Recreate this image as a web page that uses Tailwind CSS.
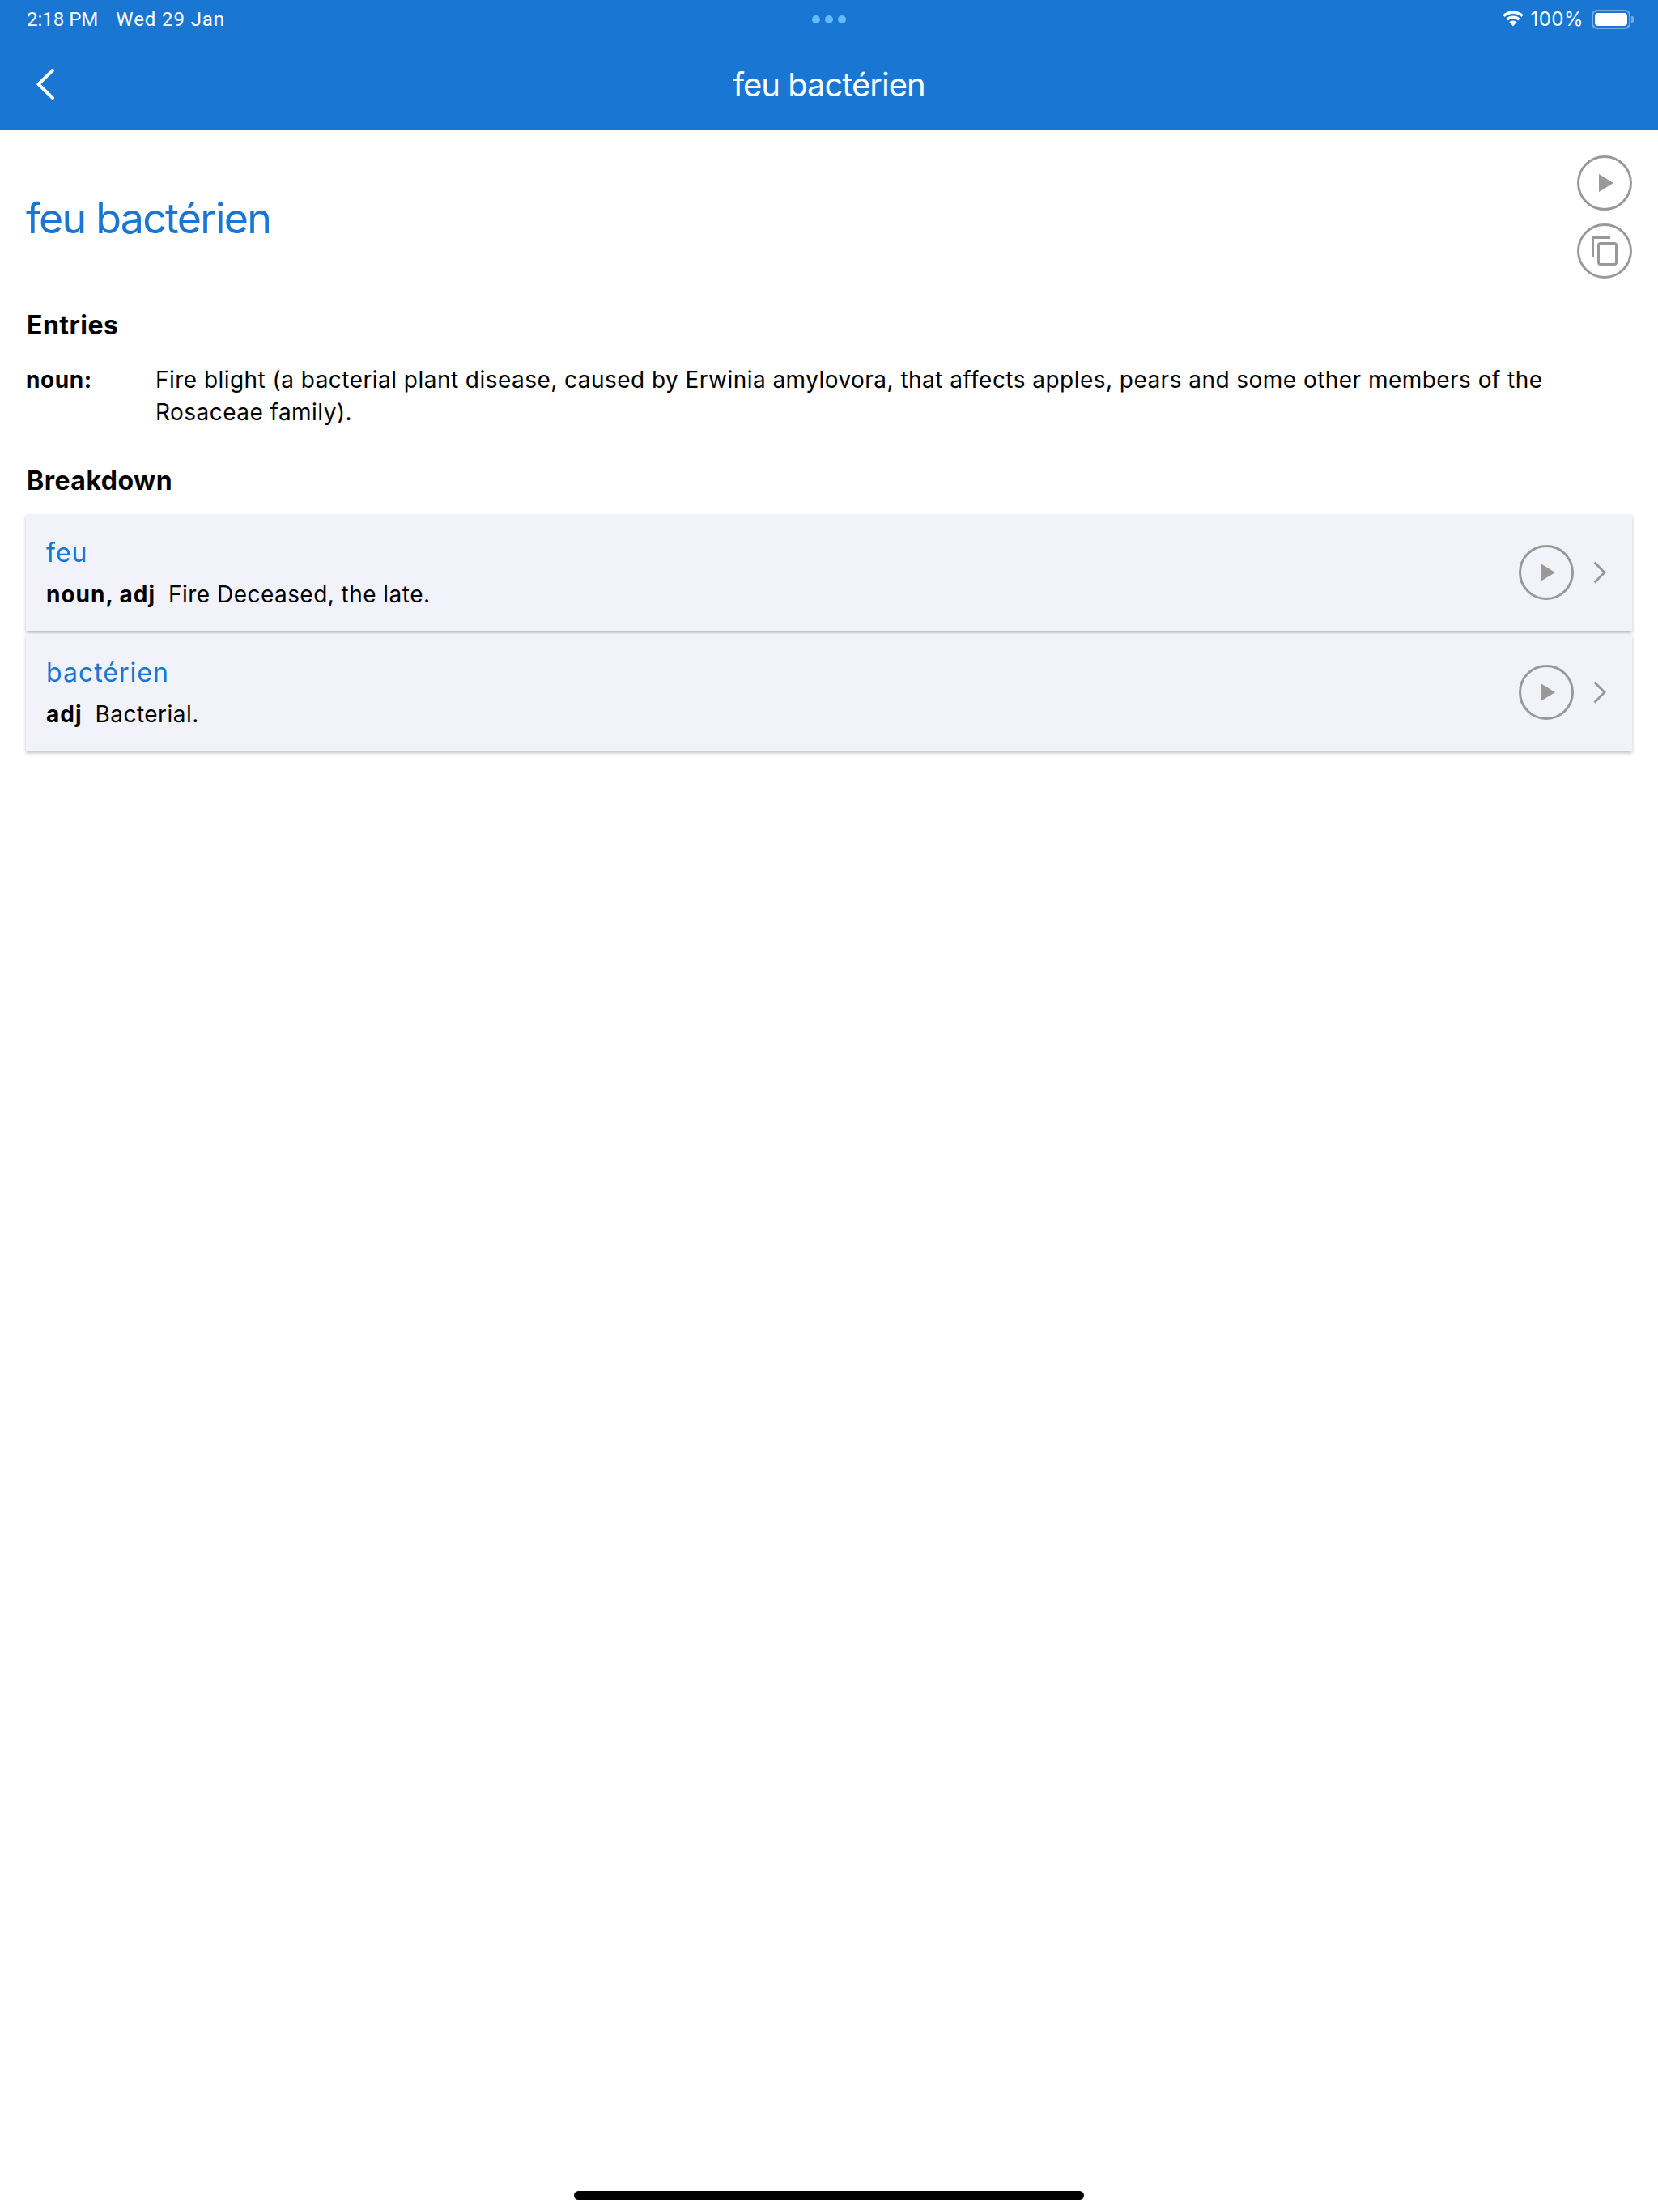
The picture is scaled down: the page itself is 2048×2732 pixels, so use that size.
<!DOCTYPE html>
<html lang="en">
<head>
    <meta charset="UTF-8">
    <meta name="viewport" content="width=device-width, initial-scale=1.0">
    <title>feu bactérien</title>
    <script src="https://cdn.jsdelivr.net/npm/@tailwindcss/browser@4"></script>
</head>
<body class="bg-white h-[2732px] w-[2048px] overflow-hidden relative font-['Inter',sans-serif] text-black">
    <!-- App bar with status row -->
    <header class="bg-[#1976d2] h-[160px] text-white flex flex-col">
        <div class="h-[48px] flex items-center justify-between pl-[33px] pr-[30px] text-[24px] relative">
            <div class="flex gap-[22px] font-['Roboto',sans-serif]">
                <span>2:18 PM</span>
                <span class="tracking-[0.9px]">Wed 29 Jan</span>
            </div>
            <div class="absolute left-[1003px] top-[19px] flex gap-[6px]">
                <span class="w-[10px] h-[10px] rounded-full bg-[#64bbff]"></span>
                <span class="w-[10px] h-[10px] rounded-full bg-[#64bbff]"></span>
                <span class="w-[10px] h-[10px] rounded-full bg-[#64bbff]"></span>
            </div>
            <div class="flex items-center gap-[4px]">
                <svg width="28" height="22" viewBox="0 0 28 22" fill="white">
                    <path d="M14 4c4 0 7.600 1.500 10.400 4.100L26.800 5.500C23.400 2.300 19 .5 14 .5S4.600 2.300 1.200 5.500l2.400 2.600C6.400 5.500 10 4 14 4z"/>
                    <path d="M14 10c2.400 0 4.600.9 6.300 2.500l2.400-2.600C20.400 7.700 17.400 6.500 14 6.500s-6.400 1.200-8.700 3.400l2.400 2.600C9.400 10.900 11.600 10 14 10z"/>
                    <path d="M14 12.500c-1.800 0-3.400.7-4.600 1.800L14 19.500l4.600-5.200c-1.200-1.100-2.800-1.800-4.600-1.800z"/>
                </svg>
                <span class="ml-[3px] mr-[6px] tracking-[0.5px]">100%</span>
                <div class="w-[48px] h-[24px] rounded-[7px] border-2 border-white/40 p-[2px] flex">
                    <div class="flex-1 bg-white rounded-[4px]"></div>
                </div>
                <div class="w-[3px] h-[8px] bg-white/40 rounded-r-[2px] -ml-[3px]"></div>
            </div>
        </div>
        <div class="flex-1 flex items-center justify-center relative pt-[2px]">
            <svg class="absolute left-[45px] top-[37px]" width="22" height="38" viewBox="0 0 22 38" fill="none" stroke="white" stroke-width="4" stroke-linecap="round" stroke-linejoin="round">
                <path d="M20 2 L2.500 19 L20 36" />
            </svg>
            <h1 class="text-[40px] leading-[48px] font-normal tracking-[-1px]">feu bactérien</h1>
        </div>
    </header>

    <main class="px-[32px]">
        <div class="flex justify-between pt-[32px] h-[190px]">
            <h2 class="text-[52px] leading-[64px] text-[#1976d2] mt-[46px] font-normal tracking-[-1.8px]">feu bactérien</h2>
            <div class="flex flex-col gap-[16px]">
                <button class="w-[68px] h-[68px] rounded-full border-[3px] border-[#999] flex items-center justify-center">
                    <svg class="ml-[4px]" width="18" height="22" viewBox="0 0 18 22" fill="#999"><path d="M0 0 L18 11 L0 22 Z"/></svg>
                </button>
                <button class="w-[68px] h-[68px] rounded-full border-[3px] border-[#999] flex items-center justify-center">
                    <svg width="32" height="36" viewBox="0 0 32 36" fill="none" stroke="#999" stroke-width="3"><path d="M1.500 26 V1.500 H23"/><rect x="8.500" y="8.500" width="22" height="26" rx="2.500"/></svg>
                </button>
            </div>
        </div>

        <h3 class="text-[32px] leading-[40px] font-bold mt-[32px] tracking-[0.5px] pl-[1px]">Entries</h3>
        <div class="flex mt-[27px] text-[28px] leading-[40px] tracking-[0.46px]">
            <div class="w-[160px] shrink-0 font-bold tracking-[0.6px]">noun:</div>
            <p class="w-[1780px]">Fire blight (a bacterial plant disease, caused by Erwinia amylovora, that affects apples, pears and some other members of the Rosaceae family).</p>
        </div>

        <h3 class="text-[32px] leading-[40px] font-bold mt-[45px] tracking-[0.5px] pl-[1px]">Breakdown</h3>

        <!-- Breakdown list -->
        <div class="mt-[21px] flex flex-col gap-[4px]">
            <div class="bg-[#f1f2fa] h-[144px] shadow-[0_3px_4px_rgba(0,0,0,0.25)] flex items-center pl-[25px] pr-[32px]">
                <div class="flex-1 pt-[3px]">
                    <div class="text-[32px] leading-[40px] text-[#1976d2] tracking-[1px]">feu</div>
                    <div class="text-[28px] leading-[40px] tracking-[0.46px] mt-[11px]"><b class="font-bold tracking-[1px] mr-[16px]">noun, adj</b>Fire Deceased, the late.</div>
                </div>
                <button class="w-[68px] h-[68px] rounded-full border-[3px] border-[#999] flex items-center justify-center">
                    <svg class="ml-[4px]" width="18" height="22" viewBox="0 0 18 22" fill="#999"><path d="M0 0 L18 11 L0 22 Z"/></svg>
                </button>
                <svg class="ml-[24px]" width="16" height="28" viewBox="0 0 16 28" fill="none" stroke="#999" stroke-width="3"><path d="M1.500 1.500 L14 14 L1.500 26.500"/></svg>
            </div>
            <div class="bg-[#f1f2fa] h-[144px] shadow-[0_3px_4px_rgba(0,0,0,0.25)] flex items-center pl-[25px] pr-[32px]">
                <div class="flex-1 pt-[3px]">
                    <div class="text-[32px] leading-[40px] text-[#1976d2] tracking-[1px]">bactérien</div>
                    <div class="text-[28px] leading-[40px] tracking-[0.46px] mt-[11px]"><b class="font-bold tracking-[1px] mr-[16px]">adj</b>Bacterial.</div>
                </div>
                <button class="w-[68px] h-[68px] rounded-full border-[3px] border-[#999] flex items-center justify-center">
                    <svg class="ml-[4px]" width="18" height="22" viewBox="0 0 18 22" fill="#999"><path d="M0 0 L18 11 L0 22 Z"/></svg>
                </button>
                <svg class="ml-[24px]" width="16" height="28" viewBox="0 0 16 28" fill="none" stroke="#999" stroke-width="3"><path d="M1.500 1.500 L14 14 L1.500 26.500"/></svg>
            </div>
        </div>
    </main>

    <!-- Home indicator -->
    <div class="absolute left-[709px] top-[2706px] w-[630px] h-[11px] rounded-full bg-black"></div>
</body>
</html>
